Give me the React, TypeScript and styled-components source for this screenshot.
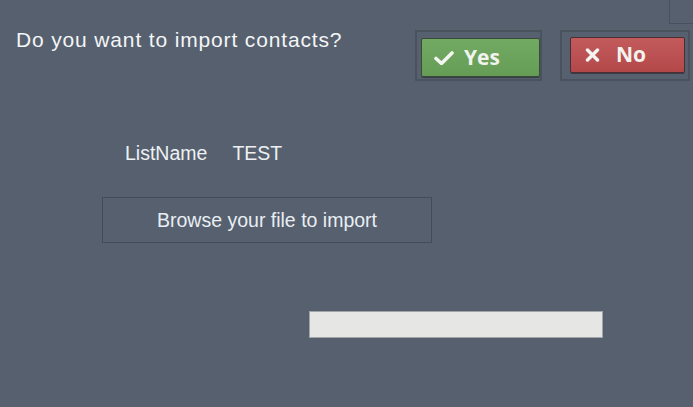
import React from "react";
import styled, { createGlobalStyle } from "styled-components";

const Global = createGlobalStyle`
  html, body { margin: 0; padding: 0; background: #56606f; }
  body { font-family: "Liberation Sans", Arial, sans-serif; }
`;

const Screen = styled.div`
  width: 693px;
  height: 407px;
  overflow: hidden;
  background: #56606f;
  display: flex;
  flex-direction: column;
`;

const TopStrip = styled.div`
  height: 24px;
  display: flex;
  justify-content: flex-end;
`;

const CornerBox = styled.div`
  width: 32px;
  height: 23px;
  border: 1px solid #48505c;
  border-top: none;
  margin-right: -10px;
`;

const Header = styled.div`
  display: flex;
  justify-content: space-between;
  align-items: flex-start;
  margin-top: 6px;
`;

const Title = styled.h1`
  margin: -2px 0 0 16px;
  font-family: "Liberation Sans", Arial, sans-serif;
  font-weight: 400;
  font-size: 21px;
  line-height: 24px;
  letter-spacing: 0.85px;
  color: #f4f5f6;
`;

const Actions = styled.div`
  display: flex;
  gap: 18px;
  margin-right: 3px;
`;

const Frame = styled.div<{ $pad: string }>`
  border: 2px solid #4a525e;
  padding: ${(p) => p.$pad};
  display: flex;
`;

const ActionButton = styled.button<{ $tone: "yes" | "no"; $w: number; $h: number }>`
  width: ${(p) => p.$w}px;
  height: ${(p) => p.$h}px;
  display: flex;
  align-items: center;
  box-sizing: border-box;
  border: 1px solid ${(p) => (p.$tone === "yes" ? "#3c4a3a" : "#4a2e33")};
  border-radius: 2px;
  background: ${(p) =>
    p.$tone === "yes"
      ? "linear-gradient(#72aa63, #659d57)"
      : "linear-gradient(#c25b5c, #b44849)"};
  box-shadow: 0 1px 0 rgba(0, 0, 0, 0.35);
  color: #f2f2ee;
  font-family: "Open Sans", "DejaVu Sans", sans-serif;
  font-weight: 700;
  font-size: 21px;
  padding: 0 0 0 ${(p) => (p.$tone === "yes" ? 12 : 14)}px;
  gap: ${(p) => (p.$tone === "yes" ? 10 : 16)}px;
  cursor: pointer;
`;

const Label = styled.span`
  line-height: 1;
  margin-top: -1px;
`;

const Body = styled.div`
  display: flex;
  flex-direction: column;
  padding-left: 102px;
`;

const InfoRow = styled.div`
  display: flex;
  gap: 25px;
  margin-top: 60px;
  padding-left: 23px;
  font-size: 19.5px;
  line-height: 24px;
  color: #eef0f3;
`;

const BrowseBox = styled.div`
  margin-top: 32px;
  width: 330px;
  height: 46px;
  box-sizing: border-box;
  border: 1px solid #454c57;
  display: flex;
  align-items: center;
  justify-content: center;
  font-size: 19.5px;
  color: #e9eef3;
`;

const Progress = styled.div`
  margin: 68px 0 0 309px;
  width: 294px;
  height: 27px;
  box-sizing: border-box;
  border: 1px solid #a3a6a8;
  background: #e6e6e4;
`;

const Check = () => (
  <svg width="20" height="14" viewBox="0 0 20 14">
    <path d="M2 7.5 L7.5 12.5 L18 2" fill="none" stroke="#f4f4f0" strokeWidth="3.6" strokeLinecap="round" strokeLinejoin="round" />
  </svg>
);

const Cross = () => (
  <svg width="15" height="14" viewBox="0 0 15 14">
    <path d="M2.5 2 L12.5 12 M12.5 2 L2.5 12" fill="none" stroke="#f4f4f0" strokeWidth="3.4" strokeLinecap="round" />
  </svg>
);

export default function App() {
  return (
    <>
      <Global />
      <Screen>
        <TopStrip>
          <CornerBox />
        </TopStrip>
        <Header>
          <Title>Do you want to import contacts?</Title>
          <Actions>
            <Frame $pad="6px 0px 1px 4px">
              <ActionButton $tone="yes" $w={119} $h={39}>
                <Check />
                <Label>Yes</Label>
              </ActionButton>
            </Frame>
            <Frame $pad="5px 3px 6px 8px">
              <ActionButton $tone="no" $w={115} $h={36}>
                <Cross />
                <Label>No</Label>
              </ActionButton>
            </Frame>
          </Actions>
        </Header>
        <Body>
          <InfoRow>
            <span>ListName</span>
            <span>TEST</span>
          </InfoRow>
          <BrowseBox>Browse your file to import</BrowseBox>
        </Body>
        <Progress />
      </Screen>
    </>
  );
}
